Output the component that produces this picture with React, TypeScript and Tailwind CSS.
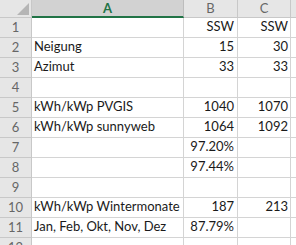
const rows: [string, string, string, string][] = [
  ["1", "", "SSW", "SSW"],
  ["2", "Neigung", "15", "30"],
  ["3", "Azimut", "33", "33"],
  ["4", "", "", ""],
  ["5", "kWh/kWp PVGIS", "1040", "1070"],
  ["6", "kWh/kWp sunnyweb", "1064", "1092"],
  ["7", "", "97.20%", ""],
  ["8", "", "97.44%", ""],
  ["9", "", "", ""],
  ["10", "kWh/kWp Wintermonate", "187", "213"],
  ["11", "Jan, Feb, Okt, Nov, Dez", "87.79%", ""],
  ["12", "", "", ""],
];

export default function App() {
  return (
    <div
      className="w-[296px] h-[245px] overflow-hidden bg-white text-[13px] leading-none text-[#1a1a1a]"
      style={{ fontFamily: "Lato, 'Liberation Sans', sans-serif" }}
    >
      <div className="flex h-[18px]">
        <div className="relative w-[32px] shrink-0 bg-[#e6e6e6] border-r border-b border-[#c8c8c8] overflow-hidden">
          <div className="absolute right-[2px] bottom-[2px] w-0 h-0 border-l-[12px] border-l-transparent border-b-[12px] border-b-[#b5b5b5]" />
        </div>
        <div className="w-[152px] shrink-0 flex items-center justify-center bg-[#d2d2d2] border-r border-[#bdbdbd] border-b-2 border-b-[#217346] text-[#217346] font-bold text-[13px]">
          A
        </div>
        <div className="w-[54px] shrink-0 flex items-center justify-center bg-[#e6e6e6] border-r border-b border-[#c8c8c8] text-[#666] text-[13px]">
          B
        </div>
        <div className="w-[53px] shrink-0 flex items-center justify-center bg-[#e6e6e6] border-r border-b border-[#c8c8c8] text-[#666] text-[13px]">
          C
        </div>
        <div className="flex-1 bg-[#e6e6e6] border-b border-[#c8c8c8]" />
      </div>
      {rows.map(([n, a, b, c]) => (
        <div key={n} className="flex h-[20px]">
          <div className="w-[32px] shrink-0 flex items-end justify-center pb-[3px] bg-[#e6e6e6] border-r border-b border-[#c8c8c8] text-[#666] text-[13px]">
            {n}
          </div>
          <div className="w-[152px] shrink-0 flex items-end pl-[2px] pb-[4px] border-r border-b border-[#d4d4d4] whitespace-nowrap overflow-visible relative z-10">
            {a}
          </div>
          <div className="w-[54px] shrink-0 flex items-end justify-end pr-[3px] pb-[4px] border-r border-b border-[#d4d4d4]">
            {b}
          </div>
          <div className="w-[53px] shrink-0 flex items-end justify-end pr-[2px] pb-[4px] border-r border-b border-[#d4d4d4]">
            {c}
          </div>
          <div className="flex-1 border-b border-[#d4d4d4]" />
        </div>
      ))}
    </div>
  );
}
